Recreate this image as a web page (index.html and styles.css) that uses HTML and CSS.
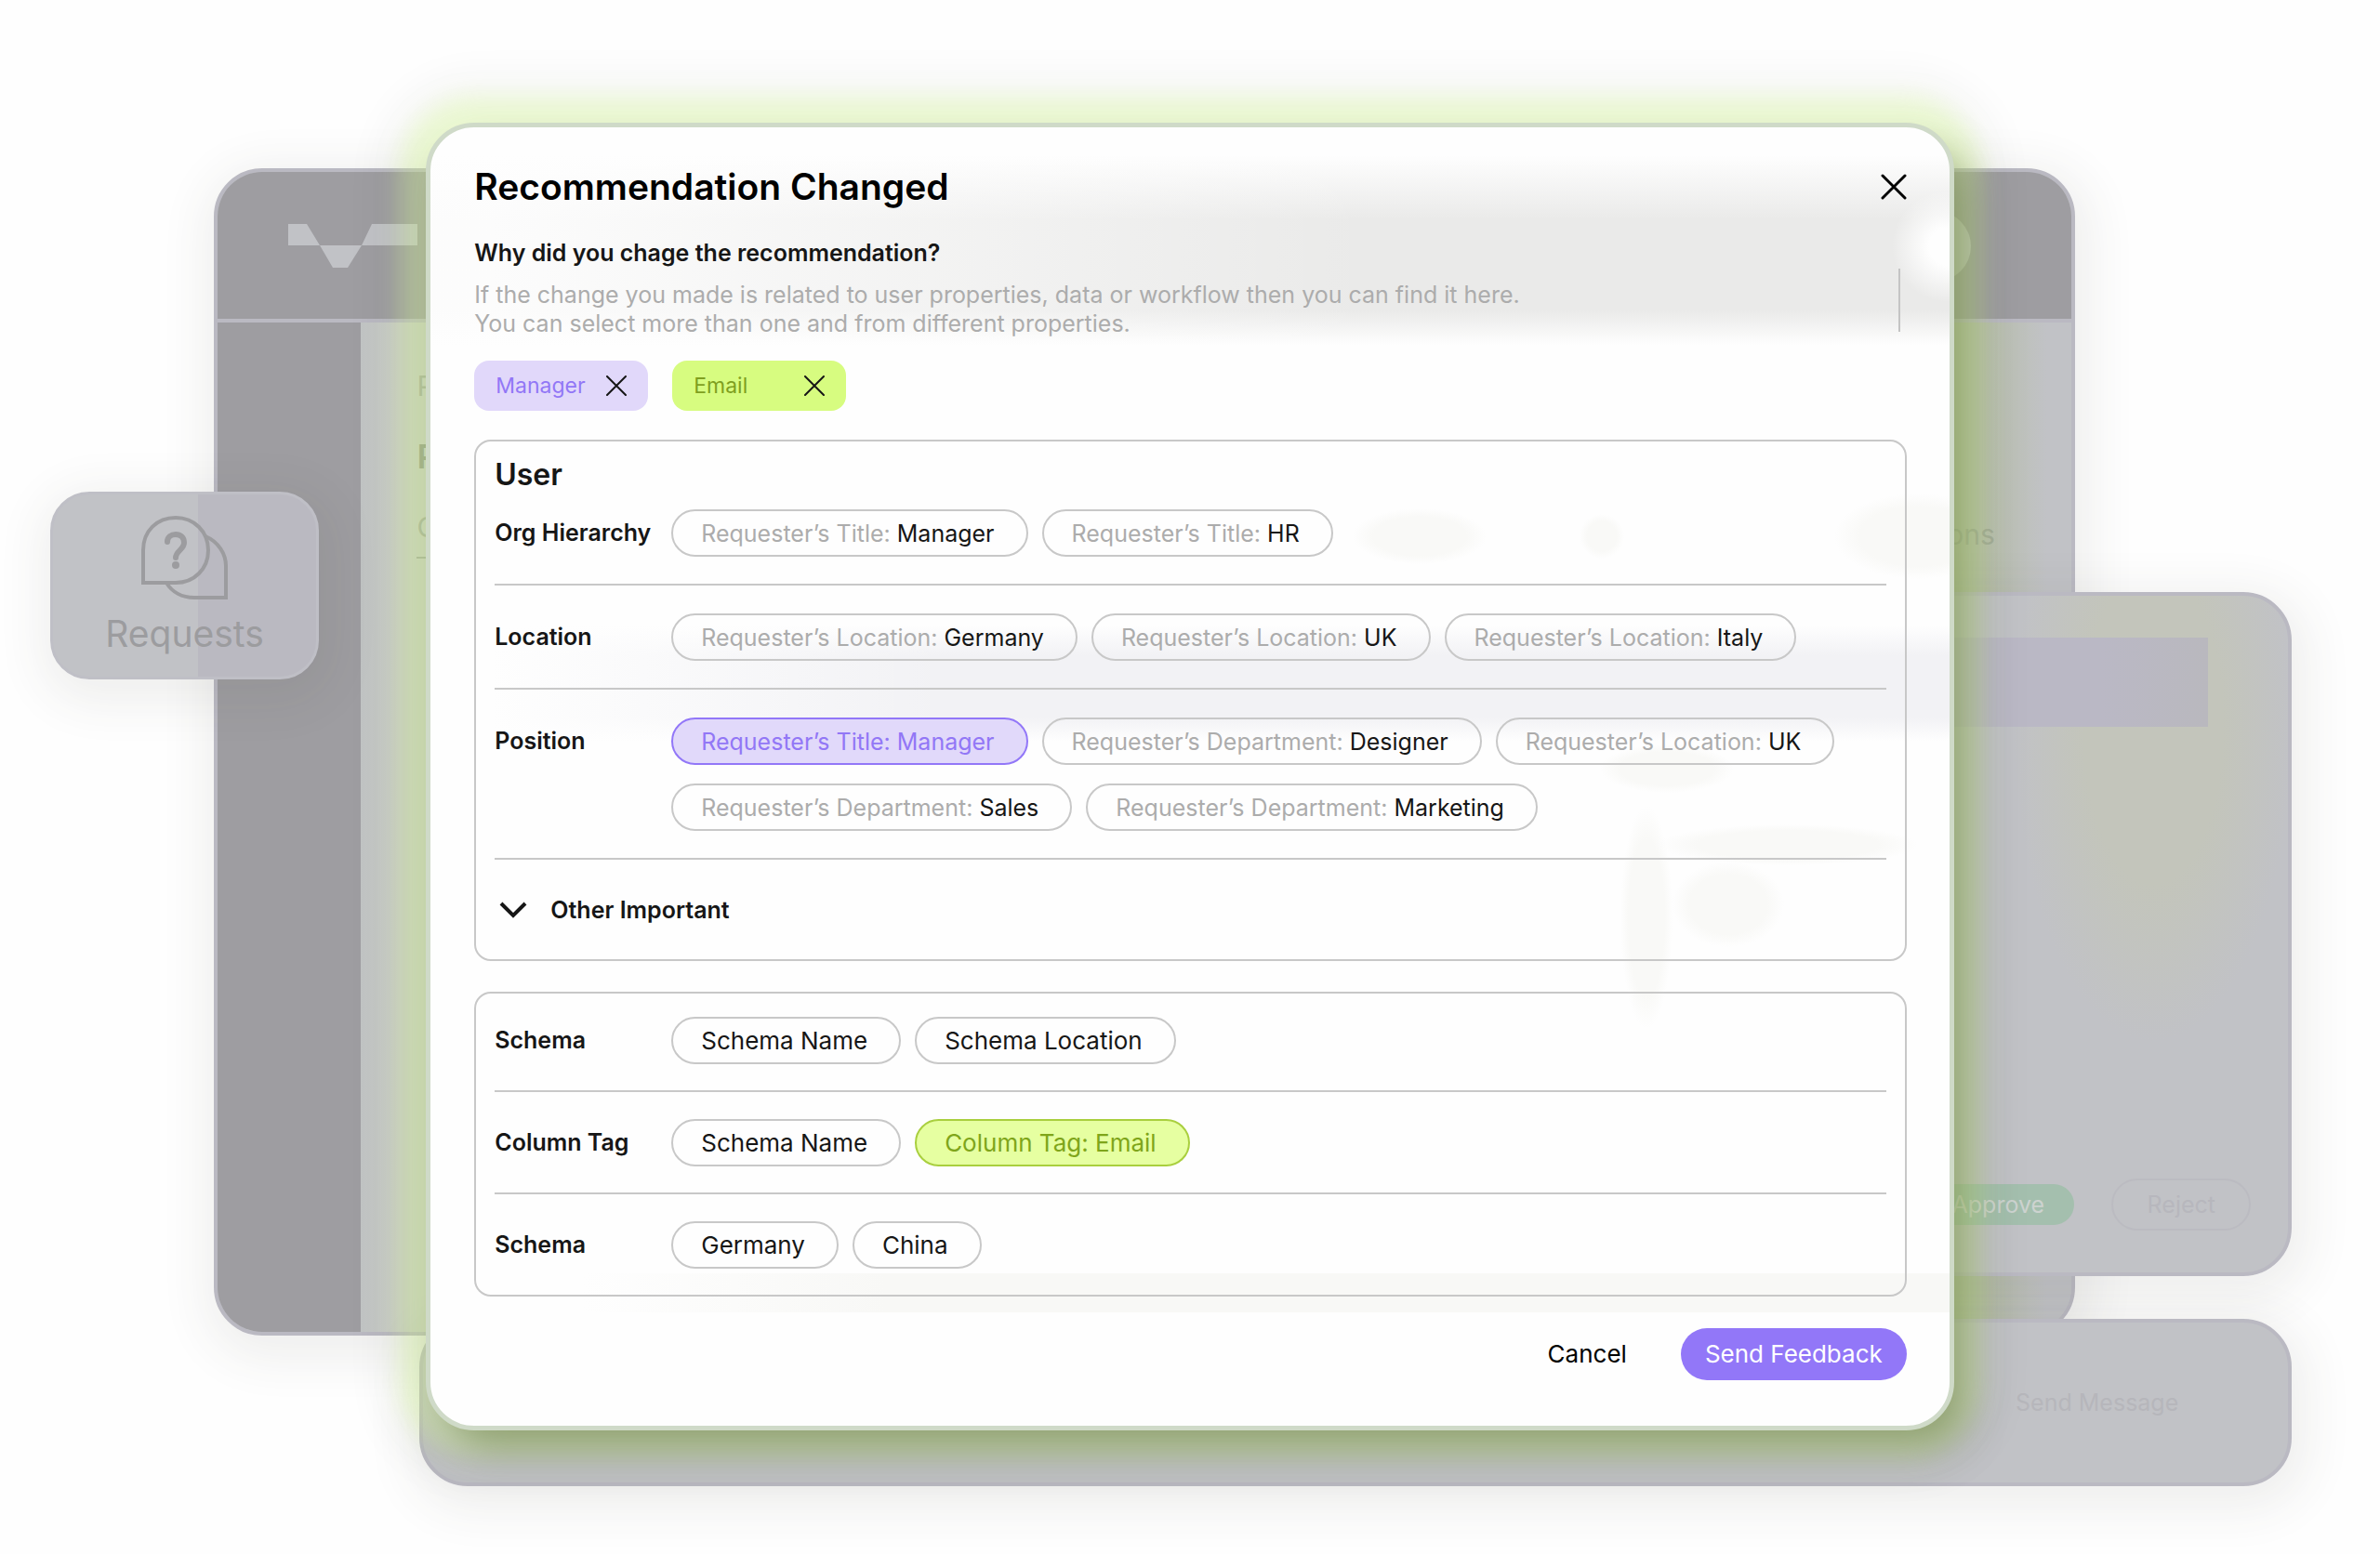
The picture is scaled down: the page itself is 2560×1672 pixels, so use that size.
FILE: index.html
```html
<!DOCTYPE html>
<html lang="en">
<head>
<meta charset="utf-8">
<title>Recommendation Changed</title>
<link rel="stylesheet" href="styles.css">
</head>
<body>
<main class="stage">
  <div class="backdrop" aria-hidden="true">
    <section class="window window-main">
      <header class="window-bar">
        <svg class="logo" viewBox="0 0 139 47"><path d="M0 0H20L34 23H79L90 0H139V23H79L64 47H48L34 23H0Z"/></svg>
        <span class="avatar"></span>
      </header>
      <div class="window-body">
        <nav class="window-side"></nav>
        <div class="window-content">
          <span class="peek">P</span>
          <span class="peek peek-strong">R</span>
          <span class="peek peek-ruled">C</span>
        </div>
        <div class="window-end"><span class="peek-end">ons</span></div>
      </div>
    </section>
    <section class="window window-panel">
      <div class="panel-strip"></div>
      <div class="panel-actions">
        <span class="ghost ghost-approve">Approve</span>
        <span class="ghost">Reject</span>
      </div>
    </section>
    <section class="window window-message"><span>Send Message</span></section>
    <section class="tile">
      <svg class="tile-icon" viewBox="0 0 96 92" fill="none" stroke="currentColor" stroke-width="4">
        <path d="M3 73V38C3 17 18 3 38 3S73 18 73 38 58 73 38 73Z"/>
        <path d="M70 23C84 29 92 42 92 55V89H58C45 89 34 83 28 73"/>
        <path d="M29 29C29 24 33 21 38 21S47 24 47 30C47 37 38 39 38 46" stroke-width="6" stroke-linecap="round"/>
        <circle cx="38" cy="54" r="4" fill="currentColor" stroke="none"/>
      </svg>
      <span>Requests</span>
    </section>
  </div>

  <div class="modal" role="dialog" aria-labelledby="title">
    <div class="modal-head">
      <h1 id="title">Recommendation Changed</h1>
      <button class="close" aria-label="Close"><svg viewBox="0 0 28 28"><path d="M2 2L26 26M26 2L2 26"/></svg></button>
    </div>
    <h2 class="question">Why did you chage the recommendation?</h2>
    <div class="hint">
      <p>If the change you made is related to user properties, data or workflow then you can find it here.<br>You can select more than one and from different properties.</p>
      <span class="scroll-mark"></span>
    </div>

    <div class="chips">
      <span class="chip chip-purple">Manager <button aria-label="Remove Manager"><svg viewBox="0 0 22 22"><path d="M1 1L21 21M21 1L1 21"/></svg></button></span>
      <span class="chip chip-green">Email <button aria-label="Remove Email"><svg viewBox="0 0 22 22"><path d="M1 1L21 21M21 1L1 21"/></svg></button></span>
    </div>

    <section class="card card-user">
      <h2 class="card-title">User</h2>
      <div class="row">
        <h3>Org Hierarchy</h3>
        <div class="pills">
          <button class="pill"><span>Requester’s Title:</span> Manager</button>
          <button class="pill"><span>Requester’s Title:</span> HR</button>
        </div>
      </div>
      <div class="row">
        <h3>Location</h3>
        <div class="pills">
          <button class="pill"><span>Requester’s Location:</span> Germany</button>
          <button class="pill"><span>Requester’s Location:</span> UK</button>
          <button class="pill"><span>Requester’s Location:</span> Italy</button>
        </div>
      </div>
      <div class="row">
        <h3>Position</h3>
        <div class="pills">
          <button class="pill pill-purple" aria-pressed="true">Requester’s Title: Manager</button>
          <button class="pill"><span>Requester’s Department:</span> Designer</button>
          <button class="pill"><span>Requester’s Location:</span> UK</button>
          <button class="pill"><span>Requester’s Department:</span> Sales</button>
          <button class="pill"><span>Requester’s Department:</span> Marketing</button>
        </div>
      </div>
      <div class="row">
        <button class="expander" aria-expanded="false"><svg viewBox="0 0 30 18"><path d="M2 2L15 15L28 2"/></svg>Other Important</button>
      </div>
    </section>

    <section class="card card-data">
      <div class="row">
        <h3>Schema</h3>
        <div class="pills">
          <button class="pill">Schema Name</button>
          <button class="pill">Schema Location</button>
        </div>
      </div>
      <div class="row">
        <h3>Column Tag</h3>
        <div class="pills">
          <button class="pill">Schema Name</button>
          <button class="pill pill-green" aria-pressed="true">Column Tag: Email</button>
        </div>
      </div>
      <div class="row">
        <h3>Schema</h3>
        <div class="pills">
          <button class="pill">Germany</button>
          <button class="pill">China</button>
        </div>
      </div>
    </section>

    <footer class="modal-foot">
      <button class="cancel">Cancel</button>
      <button class="send">Send Feedback</button>
    </footer>
  </div>
</main>
</body>
</html>
```
FILE: styles.css
```css
* { box-sizing: border-box; }

body {
  margin: 0;
  background: #fefefe;
  color: #161616;
  font-family: Inter, "Liberation Sans", sans-serif;
  font-size: 25px;
  line-height: 32px;
}

h1, h2, h3, p { margin: 0; }

button {
  font: inherit;
  color: inherit;
  background: none;
  border: 0;
  padding: 0;
  cursor: pointer;
}

svg { display: block; }

.stage {
  position: relative;
  min-height: 100vh;
  padding: 132px 17.9%;
  overflow: hidden;
}

/* Windows behind the dialog */
.backdrop { position: absolute; inset: 0; }

.window, .tile {
  position: absolute;
  background: #c1c2c6;
  border: 4px solid #bab9c2;
  border-radius: 52px;
  box-shadow: 4px 12px 50px 14px rgba(60, 60, 50, .08);
}

.window-main {
  left: 9%;
  right: 12.8%;
  top: 181px;
  height: 1256px;
  display: flex;
  flex-direction: column;
  overflow: hidden;
}
.window-bar {
  display: flex;
  justify-content: space-between;
  align-items: flex-start;
  height: 158px;
  padding: 42px 108px 0 76px;
  background: #9e9da1;
}
.window-bar .logo { margin-top: 14px; }
.logo { width: 139px; height: 47px; fill: #c1c2c6; }
.avatar { width: 76px; height: 76px; border-radius: 50%; background: #bdbec0; }
.window-body {
  flex: 1;
  display: flex;
  border-top: 4px solid #bab9c2;
}
.window-side { width: 154px; background: #9e9da1; }
.window-content {
  flex: 1;
  display: flex;
  flex-direction: column;
  gap: 44px;
  padding: 52px 60px;
  background: linear-gradient(90deg, #c1c4c4, #cbcec8 40px);
  color: #a3a9a0;
}
.window-end {
  width: 134px;
  padding-top: 212px;
  background: linear-gradient(90deg, #b9c0ad 30%, #c1c2c6 80%);
  color: #a3ab9a;
}
.peek, .peek-end { font-size: 30px; }
.peek-strong { font-size: 36px; font-weight: 600; color: #8e9589; }
.peek-ruled { padding-bottom: 16px; border-bottom: 2px solid #a3a9a0; }

.window-panel {
  left: 70%;
  right: 3.7%;
  top: 637px;
  height: 736px;
  padding: 45px 0;
  display: flex;
  flex-direction: column;
  justify-content: space-between;
  background: radial-gradient(ellipse 150px 340px at 520px 140px, #c3c5bb 50%, #c1c2c6);
}
.panel-strip {
  height: 96px;
  margin-right: 86px;
  background: linear-gradient(90deg, #bab8c5 80%, #b9b8be);
}
.panel-actions {
  display: flex;
  justify-content: flex-end;
  gap: 40px;
  padding-right: 40px;
}
.ghost {
  width: 150px;
  height: 56px;
  border: 2px solid #bbbbc1;
  border-radius: 28px;
  color: #b7b7bd;
  line-height: 52px;
  text-align: center;
}
.ghost-approve {
  height: 44px;
  margin: 6px 0;
  padding-right: 14px;
  background: #a4bfae;
  border: 0;
  color: #cdd3d0;
  line-height: 44px;
}

.window-message {
  left: 17.6%;
  right: 3.7%;
  top: 1419px;
  height: 180px;
  display: flex;
  justify-content: flex-end;
  align-items: center;
  padding-right: 118px;
  color: #b6b6bb;
}

.tile {
  left: 54px;
  top: 529px;
  width: 289px;
  height: 202px;
  border-width: 3px;
  border-color: #bfbfc6;
  border-radius: 42px;
  display: flex;
  flex-direction: column;
  align-items: center;
  gap: 12px;
  padding-top: 22px;
  background: linear-gradient(90deg, #c1c2c6 55%, #bab9c1 55%);
  color: #9c9c9f;
  font-size: 39px;
  line-height: 48px;
}
.tile-icon { width: 96px; height: 92px; }

/* Dialog */
.modal {
  position: relative;
  padding: 40px 46px 49px 47px;
  border: 5px solid #cfdac8;
  border-radius: 52px;
  background:
    radial-gradient(circle at 1632px 128px, #fefefe 20px, rgba(254, 254, 254, 0) 60px),
    radial-gradient(ellipse 72px 30px at 1064px 440px, #f9f9f7 70%, rgba(249, 249, 247, 0)),
    radial-gradient(circle at 1260px 440px, #f9f9f7 16px, rgba(249, 249, 247, 0) 24px),
    radial-gradient(ellipse 90px 46px at 1600px 440px, #f9f9f7 70%, rgba(249, 249, 247, 0)),
    radial-gradient(ellipse 72px 26px at 1330px 690px, #f9f9f7 70%, rgba(249, 249, 247, 0)),
    radial-gradient(ellipse 140px 22px at 1460px 772px, #f9f9f7 70%, rgba(249, 249, 247, 0)),
    radial-gradient(ellipse 60px 46px at 1396px 836px, #f9f9f7 70%, rgba(249, 249, 247, 0)),
    radial-gradient(ellipse 28px 120px at 1308px 850px, #f9f9f7 70%, rgba(249, 249, 247, 0)),
    linear-gradient(90deg, rgba(254, 254, 254, .9) 4%, rgba(254, 254, 254, 0) 62%) 0 30px / 100% 204px no-repeat,
    linear-gradient(rgba(234, 234, 233, 0), #eaeae9 34%, #eaeae9 82%, rgba(234, 234, 233, 0)) 0 30px / 100% 204px no-repeat,
    linear-gradient(90deg, #fefefe 4%, rgba(254, 254, 254, 0) 34%) 0 536px / 100% 124px no-repeat,
    linear-gradient(rgba(242, 242, 245, 0), #f2f2f5 26%, #f2f2f5 80%, rgba(242, 242, 245, 0)) 0 536px / 100% 124px no-repeat,
    linear-gradient(90deg, rgba(248, 248, 246, 0) 10%, #f8f8f6 30%) 0 1233px / 100% 42px no-repeat,
    #fefefe;
  background-clip: border-box;
  box-shadow:
    18px 24px 40px -6px rgba(100, 120, 62, .55),
    0 0 24px 28px rgba(216, 252, 150, .36),
    0 0 40px 52px rgba(60, 60, 50, .04);
}

.modal-head {
  display: flex;
  justify-content: space-between;
  align-items: center;
  margin-bottom: 31px;
}
h1 {
  color: #000;
  font-size: 39px;
  font-weight: 600;
  line-height: 48px;
}
.close svg { width: 28px; height: 28px; stroke: #000; stroke-width: 3; stroke-linecap: round; }

.question, h3 { font-size: 25px; font-weight: 600; line-height: 32px; }
.question { margin-bottom: 14px; }

.hint {
  display: flex;
  justify-content: space-between;
  padding-right: 7px;
  color: #acacac;
  line-height: 31px;
}
.scroll-mark { width: 2px; height: 68px; margin-top: -13px; background: #c4c4c4; }

.chips { display: flex; gap: 26px; margin: 24px 0 31px; }
.chip {
  display: flex;
  justify-content: space-between;
  align-items: center;
  width: 187px;
  height: 54px;
  padding: 0 23px;
  border-radius: 16px;
  font-size: 23px;
}
.chip svg { width: 22px; height: 22px; stroke: #161616; stroke-width: 2; stroke-linecap: round; }
.chip-purple { background: #e1d8fa; color: #9277f6; }
.chip-green { background: #d7fc80; color: #7f9f1f; }

.card {
  padding: 0 20px;
  border: 2px solid #c8c8c8;
  border-radius: 18px;
}
.card-user { padding-top: 16px; margin-bottom: 33px; }
.card-title { font-size: 32px; font-weight: 600; line-height: 40px; }

.row { display: flex; padding: 30px 0 29px; }
.row + .row { border-top: 2px solid #c8c8c8; }
.card-title + .row { padding-top: 17px; }
.card-data .row { padding: 29px 0 28px; }
.card-data .row:first-child { padding-top: 25px; }

h3 { width: 190px; flex: none; padding-top: 9px; white-space: nowrap; }
.pills { display: flex; flex-wrap: wrap; gap: 20px 15px; }
.card-data .pills { font-size: 26px; }
.pill {
  height: 51px;
  padding: 0 34px 0 30px;
  border: 2px solid #c8c8c8;
  border-radius: 26px;
  white-space: nowrap;
}
.pill span { color: #acacac; }
.pill-purple { background: #e1d9fa; border-color: #9277f8; color: #9277f6; }
.pill-green { background: #e6ffa1; border-color: #a9cf3e; color: #7fa51a; }

.expander {
  display: flex;
  align-items: center;
  gap: 25px;
  height: 48px;
  padding-left: 5px;
  font-weight: 600;
}
.expander svg { width: 30px; height: 18px; fill: none; stroke: #161616; stroke-width: 4; }

.modal-foot {
  display: flex;
  justify-content: flex-end;
  gap: 58px;
  margin-top: 34px;
  font-size: 26px;
}
.cancel { color: #000; }
.send {
  height: 56px;
  padding: 0 26px;
  border-radius: 28px;
  background: #9277f8;
  color: #fff;
}
```
